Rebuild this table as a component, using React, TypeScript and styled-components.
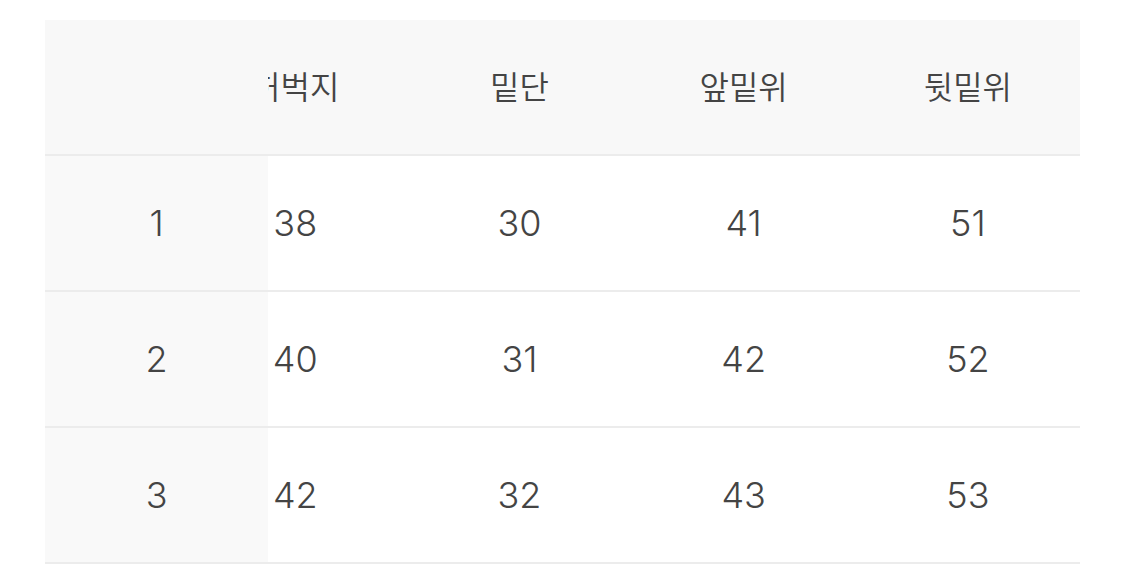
import React, { useEffect, useRef } from "react";
import styled, { createGlobalStyle } from "styled-components";

const Global = createGlobalStyle`
  html, body { margin: 0; padding: 0; background: #ffffff; }
  body { font-family: Inter, "Noto Sans CJK KR", sans-serif; }
`;

const Page = styled.div`
  padding: 20px 45px 0 45px;
`;

const Scroller = styled.div`
  width: 1035px;
  overflow-x: auto;
  scrollbar-width: none;
  &::-webkit-scrollbar { display: none; }
`;

const Table = styled.table`
  width: 1120px;
  table-layout: fixed;
  border-collapse: separate;
  border-spacing: 0;
`;

const HeadCell = styled.th<{ $sticky?: boolean }>`
  width: 224px;
  height: 136px;
  box-sizing: border-box;
  padding: 0 0 5px 0;
  background: #f8f8f8;
  border-bottom: 2px solid #ececec;
  text-align: center;
  vertical-align: middle;
  font-family: "Noto Sans CJK KR", sans-serif;
  font-weight: 350;
  font-size: 32px;
  color: #444444;
  ${(p) => p.$sticky && `position: sticky; left: 0; z-index: 2; width: 223px;`}
`;

const BodyCell = styled.td<{ $sticky?: boolean }>`
  height: 136px;
  box-sizing: border-box;
  padding: 0;
  background: ${(p) => (p.$sticky ? "#f9f9f9" : "#ffffff")};
  border-bottom: 2px solid #ececec;
  text-align: center;
  vertical-align: middle;
  font-family: Inter, "Noto Sans CJK KR", sans-serif;
  font-weight: 300;
  font-size: 36px;
  color: #444444;
  ${(p) => p.$sticky && `position: sticky; left: 0; z-index: 2;`}
`;

const headers = ["허벅지", "밑단", "앞밑위", "뒷밑위"];
const rows = [
  { size: "1", values: ["38", "30", "41", "51"] },
  { size: "2", values: ["40", "31", "42", "52"] },
  { size: "3", values: ["42", "32", "43", "53"] },
];

export default function App() {
  const ref = useRef<HTMLDivElement>(null);
  useEffect(() => {
    if (ref.current) ref.current.scrollLeft = ref.current.scrollWidth;
  }, []);
  return (
    <>
      <Global />
      <Page>
        <Scroller ref={ref}>
          <Table>
            <thead>
              <tr>
                <HeadCell $sticky />
                {headers.map((h) => (
                  <HeadCell key={h}>{h}</HeadCell>
                ))}
              </tr>
            </thead>
            <tbody>
              {rows.map((r) => (
                <tr key={r.size}>
                  <BodyCell $sticky>{r.size}</BodyCell>
                  {r.values.map((v, i) => (
                    <BodyCell key={i}>{v}</BodyCell>
                  ))}
                </tr>
              ))}
            </tbody>
          </Table>
        </Scroller>
      </Page>
    </>
  );
}
